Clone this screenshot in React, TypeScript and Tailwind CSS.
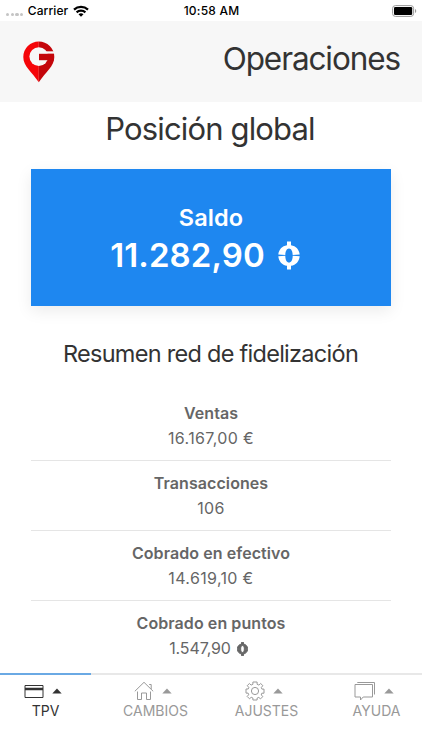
import React from "react";

function Coin({ className }: { className: string }) {
  return (
    <svg viewBox="0 0 22 29" className={className} fill="currentColor">
      <path d="M9 .5h4v3.700C18 5 21.200 8.600 21.700 13.500L14.700 14C14.700 10.200 13.200 7.400 11 7.400S7.300 10.200 7.300 14L.3 13.500C.8 8.600 4 5 9 4.200z" />
      <path d="M9 28.500h4v-3.700C18 24 21.200 20.400 21.700 15.200L14.700 14.800C14.700 18.800 13.200 21.600 11 21.600S7.300 18.800 7.300 14.800L.3 15.200C.8 20.400 4 24 9 24.800z" />
    </svg>
  );
}

function StatusBar() {
  return (
    <div className="flex h-[21px] items-center justify-between bg-white pl-[6px] pr-[5px] text-[12px] text-black">
      <div className="flex w-[120px] items-center">
        <span className="mt-[8px] flex gap-[1.500px]">
          {[0, 1, 2, 3].map((n) => (
            <i key={n} className="size-[3.200px] rounded-full bg-[#c4c4c4]" />
          ))}
        </span>
        <span className="ml-[4.500px] font-medium tracking-[0.1px]">Carrier</span>
        <svg viewBox="0 0 16 12" className="ml-[5px] h-[12px] w-[16px]" fill="none" stroke="#000" strokeWidth="2.200">
          <path d="M1 4.600a10.200 10.200 0 0 1 14 0M3.600 7.400a6.300 6.300 0 0 1 8.800 0" />
          <path d="M5.500 9.300a3.700 3.700 0 0 1 5 0L8 11.800z" fill="#000" stroke="none" />
        </svg>
      </div>
      <span className="font-medium tracking-[0.200px]">10:58 AM</span>
      <div className="flex w-[120px] justify-end">
        <svg viewBox="0 0 25 12" className="h-[12px] w-[25px]">
          <rect x=".6" y=".6" width="21" height="10.800" rx="2.800" fill="#fff" stroke="#999" />
          <rect x="2" y="2" width="18.200" height="8" rx="1.300" />
          <path d="M23 4v4c1.700-.6 1.700-3.400 0-4" fill="#999" />
        </svg>
      </div>
    </div>
  );
}

function Logo() {
  return (
    <svg viewBox="0 0 32 42" className="h-[42px] w-[32px]">
      <path d="M15.800 .5A15.500 15.500 0 0 0 .3 16C.3 25.500 9 31 15.800 41.300z" fill="#f50509" />
      <path d="M15.800 .5A15.500 15.500 0 0 1 31.300 16C31.300 25.500 22.600 31 15.800 41.300z" fill="#c4060b" />
      <circle cx="15.800" cy="15.600" r="9.400" fill="#f7f7f7" />
      <path d="M22 10.300H32V12.800H22z" fill="#f7f7f7" />
      <path d="M16 12.800H31V19.200H16z" fill="#c4060b" />
    </svg>
  );
}

function Row({ label, children, last }: { label: string; children: React.ReactNode; last?: boolean }) {
  return (
    <div className={`flex h-[70.200px] flex-col items-center pt-[10px] text-[16px] leading-[25px] text-[#666] ${last ? "" : "border-b border-[#e5e5e5]"}`}>
      <span className="font-semibold tracking-[0.080px]">{label}</span>
      <span className="flex items-center tracking-[0.350px]">{children}</span>
    </div>
  );
}

function Tab({ label, active, children }: { label: string; active?: boolean; children: React.ReactNode }) {
  return (
    <div className={`flex flex-col items-center ${active ? "text-[#333]" : "text-[#999]"}`}>
      <div className="mr-[6px] flex h-[20px] items-center gap-[8px]">
        {children}
        <svg viewBox="0 0 10 6" className="h-[6px] w-[10px]" fill="currentColor">
          <path d="M.3 5.500L5 .5l4.700 5z" />
        </svg>
      </div>
      <span className="text-[14px] leading-[20px]">{label}</span>
    </div>
  );
}

export default function App() {
  return (
    <div className="flex h-[750px] w-[422px] flex-col overflow-hidden bg-white font-['Inter',sans-serif] text-[#333]">
      <StatusBar />
      <header className="flex h-[81px] items-center justify-between bg-[#f7f7f7] pl-[23px] pr-[22px]">
        <Logo />
        <h1 className="mb-[6px] text-[31.500px] leading-[40px] tracking-[-1.100px]">Operaciones</h1>
      </header>
      <main className="flex grow flex-col px-[31px]">
        <h2 className="mr-[2px] mt-[7px] text-center text-[31px] leading-[40px] tracking-[-0.850px]">Posición global</h2>
        <section className="mt-[20px] flex h-[136.500px] flex-col items-center bg-[#1e87f0] pt-[32px] font-semibold text-white shadow-[0_5px_15px_rgba(0,0,0,0.08)]">
          <span className="text-[23.500px] leading-[33px] tracking-[0.100px]">Saldo</span>
          <span className="mr-[12px] flex items-center text-[33px] leading-[42px] tracking-[0.100px]">
            11.282,90
            <Coin className="ml-[13px] h-[29px] w-[22px]" />
          </span>
        </section>
        <h3 className="mr-[1px] mt-[32px] text-center text-[23.500px] leading-[32px] tracking-[-0.720px]">Resumen red de fidelización</h3>
        <div className="mt-[21px]">
          <Row label="Ventas">16.167,00 €</Row>
          <Row label="Transacciones">106</Row>
          <Row label="Cobrado en efectivo">14.619,10 €</Row>
          <Row label="Cobrado en puntos" last>
            <span className="-ml-[5px] tracking-[-0.100px]">1.547,90</span>
            <Coin className="ml-[6px] h-[14px] w-[11px] stroke-current stroke-2" />
          </Row>
        </div>
      </main>
      <nav className="h-[77px] shrink-0">
        <div className="flex h-[2px] bg-[#e8e8e8]">
          <div className="w-[91px] bg-[#6aa9e4]" />
        </div>
        <div className="flex pt-[6px]">
          <div className="w-[91px]">
            <Tab label="TPV" active>
              <svg viewBox="0 0 20 15" className="h-[15px] w-[20px]" fill="none" stroke="currentColor">
                <path d="M1 1.500h18v12H1z" />
                <path d="M1 5h18" strokeWidth="2.500" />
              </svg>
            </Tab>
          </div>
          <div className="ml-[19px] w-[91px]">
            <Tab label="CAMBIOS">
              <svg viewBox="0 0 20 20" className="size-[20px]" fill="none" stroke="currentColor">
                <path d="M.8 10.300L10 1.300l9.200 9M15.200 3.500h2v4.500M3.500 10.500v8h4v-6.500h5v6.500h4v-8" />
              </svg>
            </Tab>
          </div>
          <div className="ml-[20px] w-[91px]">
            <Tab label="AJUSTES">
              <svg viewBox="0 0 20 20" className="size-[20px]" fill="none" stroke="currentColor">
                <circle cx="10" cy="10" r="3.600" />
                <path d="M7.900 1h4.200v2.300l1.800.8L15.700 2.500l2.200 2.200-1.600 1.700.6 1.700H19v4.100h-2.200l-.6 1.800 1.700 1.500-2.400 2.400-1.700-1.500-1.700.7V19H7.900v-2l-1.700-.7-1.700 1.500-2.400-2.400 1.600-1.600-.6-1.700H1V8h2.200l.6-1.700L2.200 4.700l2.200-2.200 1.700 1.600 1.800-.8z" />
              </svg>
            </Tab>
          </div>
          <div className="ml-[19px] w-[91px]">
            <Tab label="AYUDA">
              <svg viewBox="0 0 22 21" className="h-[21px] w-[22px]" fill="none" stroke="currentColor">
                <path d="M1 3.500h17.500v12.500H9.200L6.500 19v-3H1z" />
                <path d="M3.300 1.500h17.200v12" />
              </svg>
            </Tab>
          </div>
        </div>
      </nav>
    </div>
  );
}
